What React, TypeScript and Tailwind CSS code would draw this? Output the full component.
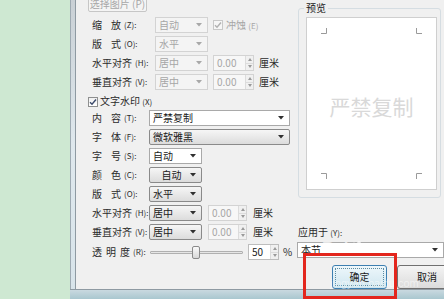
import React from 'react';

type Kind = 'white' | 'button' | 'disabled';

const Arrow = ({ gray }: { gray?: boolean }) => (
  <svg width="6" height="4" viewBox="0 0 6 4" className="shrink-0">
    <path d="M0 0h6L3 3.5z" fill={gray ? '#a8a8a8' : '#303030'} />
  </svg>
);

const Select = ({ text, w, kind, center }: { text: string; w: string; kind: Kind; center?: boolean }) => {
  const look =
    kind === 'white'
      ? 'bg-white border-[#a9a9a9] text-[#202020]'
      : kind === 'button'
        ? 'bg-gradient-to-b from-[#f6f6f6] to-[#dcdcdc] border-[#8a8a8a] rounded-[2px] text-[#202020]'
        : 'bg-[#f4f4f4] border-[#d3d3d3] text-[#a6a6a6]';
  return (
    <div className={`${w} h-[16px] border flex items-center pl-[3px] pr-[5px] shrink-0 ${look}`}>
      <span className={`flex-1 ${center ? 'text-center' : ''}`}>{text}</span>
      <Arrow gray={kind === 'disabled'} />
    </div>
  );
};

const Spin = ({ w, value, disabled }: { w: string; value: string; disabled?: boolean }) => (
  <div
    className={`${w} h-[16px] border flex shrink-0 ${
      disabled ? 'border-[#d3d3d3] bg-[#f7f7f7] text-[#a6a6a6]' : 'border-[#bdbdbd] bg-white text-[#202020]'
    }`}
  >
    <span className="flex-1 pl-[3px] flex items-center">{value}</span>
    <div className="w-[8px] flex flex-col border-l border-[#dcdcdc] bg-[#f0f0f0]">
      <div className="flex-1 flex items-center justify-center border-b border-[#dcdcdc]">
        <svg width="4" height="3" viewBox="0 0 4 3">
          <path d="M0 3h4L2 0z" fill="#9a9a9a" />
        </svg>
      </div>
      <div className="flex-1 flex items-center justify-center">
        <svg width="4" height="3" viewBox="0 0 4 3">
          <path d="M0 0h4L2 3z" fill="#9a9a9a" />
        </svg>
      </div>
    </div>
  </div>
);

// spacing between label characters: 2 chars spread wide, 3 a little, 4 none
const gapFor = (n: number) => (n === 2 ? 'gap-[9px]' : n === 3 ? 'gap-[4px]' : 'gap-0');

const Label = ({ chars, key2, w }: { chars: string[]; key2: string; w: string }) => (
  <div className={`${w} shrink-0 flex items-center text-[#2a2a2a]`}>
    <span className={`flex ${gapFor(chars.length)}`}>
      {chars.map((c, i) => (
        <span key={i}>{c}</span>
      ))}
    </span>
    <span className="ml-[3px] text-[8px]">({key2}):</span>
  </div>
);

const Check = ({ gray }: { gray?: boolean }) => (
  <div
    className={`w-[10px] h-[10px] border flex items-center justify-center shrink-0 ${
      gray ? 'border-[#c8c8c8] bg-[#f6f6f6]' : 'border-[#8e8f8f] bg-gradient-to-b from-[#f0f0f0] to-white'
    }`}
  >
    <svg width="8" height="8" viewBox="0 0 8 8">
      <path d="M1 4.2l2 2L7 1.5" fill="none" stroke={gray ? '#b0b0b0' : '#3b4a6b'} strokeWidth="1.4" />
    </svg>
  </div>
);

const Corner = ({ d }: { d: string }) => (
  <svg width="8" height="8" viewBox="0 0 8 8">
    <path d={d} fill="none" stroke="#9a9a9a" strokeWidth="1" />
  </svg>
);

export default function App() {
  return (
    <div className="relative w-[444px] h-[299px] overflow-hidden flex bg-[#cee8d2] font-['Noto_Sans_CJK_SC','Noto_Sans',sans-serif] text-[10px] leading-[12px]">
      <div className="w-[70px] shrink-0" />

      <div className="flex-1 flex flex-col">
        <div className="flex-1 flex min-h-0">
          <div className="w-[6px] shrink-0 border-l border-[#9eaab2] border-r border-r-[#8e9aa2] bg-gradient-to-b from-[#c9d0d5] via-[#dfe8ed] to-[#d8e4ea]" />

          {/* client area */}
          <div className="flex-1 bg-[#f0f0f0] flex">
            {/* left column */}
            <div className="w-[221px] shrink-0 flex flex-col">
              <div className="ml-[12px] mt-[-5px] w-[59px] h-[17px] border border-[#c6c6c6] rounded-[2px] bg-[#f4f4f4] text-[#a8a8a8] flex items-end justify-center pb-[1px]">
                选择图片 (P)
              </div>

              <div className="mt-[5px] pl-[16px] flex flex-col gap-[3px]">
                <div className="flex items-center">
                  <Label chars={['缩', '放']} key2="Z" w="w-[63px]" />
                  <Select text="自动" w="w-[53px]" kind="disabled" />
                  <div className="ml-[5px] flex items-center gap-[3px] text-[#a6a6a6]">
                    <Check gray />
                    <span>冲蚀 <span className="text-[8px]">(E)</span></span>
                  </div>
                </div>
                <div className="flex items-center">
                  <Label chars={['版', '式']} key2="O" w="w-[63px]" />
                  <Select text="水平" w="w-[53px]" kind="disabled" />
                </div>
                <div className="flex items-center">
                  <Label chars={['水', '平', '对', '齐']} key2="H" w="w-[63px]" />
                  <Select text="居中" w="w-[53px]" kind="disabled" />
                  <div className="ml-[5px]">
                    <Spin w="w-[41px]" value="0.00" disabled />
                  </div>
                  <span className="ml-[5px] text-[#2a2a2a]">厘米</span>
                </div>
                <div className="flex items-center">
                  <Label chars={['垂', '直', '对', '齐']} key2="V" w="w-[63px]" />
                  <Select text="居中" w="w-[53px]" kind="disabled" />
                  <div className="ml-[5px]">
                    <Spin w="w-[41px]" value="0.00" disabled />
                  </div>
                  <span className="ml-[5px] text-[#2a2a2a]">厘米</span>
                </div>
              </div>

              <div className="mt-[3px] h-[17px] ml-[12px] flex items-center gap-[2px] text-[#2a2a2a]">
                <Check />
                <span>文字水印 <span className="text-[8px]">(X)</span></span>
              </div>

              <div className="pl-[16px] flex flex-col gap-[3px]">
                <div className="flex items-center">
                  <Label chars={['内', '容']} key2="T" w="w-[57px]" />
                  <Select text="严禁复制" w="w-[141px]" kind="white" />
                </div>
                <div className="flex items-center">
                  <Label chars={['字', '体']} key2="F" w="w-[57px]" />
                  <Select text="微软雅黑" w="w-[141px]" kind="button" />
                </div>
                <div className="flex items-center">
                  <Label chars={['字', '号']} key2="S" w="w-[57px]" />
                  <Select text="自动" w="w-[53px]" kind="white" />
                </div>
                <div className="flex items-center">
                  <Label chars={['颜', '色']} key2="C" w="w-[57px]" />
                  <Select text="自动" w="w-[53px]" kind="button" center />
                </div>
                <div className="flex items-center">
                  <Label chars={['版', '式']} key2="O" w="w-[57px]" />
                  <Select text="水平" w="w-[53px]" kind="button" />
                </div>
                <div className="flex items-center">
                  <Label chars={['水', '平', '对', '齐']} key2="H" w="w-[57px]" />
                  <Select text="居中" w="w-[53px]" kind="button" />
                  <div className="ml-[6px]">
                    <Spin w="w-[39px]" value="0.00" disabled />
                  </div>
                  <span className="ml-[6px] text-[#2a2a2a]">厘米</span>
                </div>
                <div className="flex items-center">
                  <Label chars={['垂', '直', '对', '齐']} key2="V" w="w-[57px]" />
                  <Select text="居中" w="w-[53px]" kind="button" />
                  <div className="ml-[6px]">
                    <Spin w="w-[39px]" value="0.00" disabled />
                  </div>
                  <span className="ml-[6px] text-[#2a2a2a]">厘米</span>
                </div>
                <div className="mt-[1px] flex items-center">
                  <Label chars={['透', '明', '度']} key2="R" w="w-[58px]" />
                  <div className="w-[93px] h-[16px] flex items-center">
                    <div className="flex-1 h-[3px] border border-[#b0b0b0] bg-[#e6e6e6] rounded-[1px] flex items-center">
                      <div className="ml-[41px] w-[8px] h-[13px] shrink-0 border border-[#8a8a8a] rounded-[2px] bg-gradient-to-b from-[#fafafa] to-[#d8d8d8]" />
                    </div>
                  </div>
                  <div className="ml-[5px]">
                    <Spin w="w-[31px]" value="50" />
                  </div>
                  <span className="ml-[4px] text-[#2a2a2a]">%</span>
                </div>
              </div>
            </div>

            {/* right column */}
            <div className="w-[147px] shrink-0 flex flex-col">
              <fieldset className="ml-[1px] mt-[2px] w-[143px] border border-[#d5dde2] rounded-[3px] pb-[7px]">
                <legend className="ml-[5px] px-[2px] text-[#1a1a1a] leading-[12px]">预览</legend>
                <div className="ml-[7px] mt-[3px] w-[131px] h-[173px] bg-white border border-[#cfcfcf] flex flex-col justify-between px-[14px] py-[10px]">
                  <div className="flex justify-between">
                    <Corner d="M0 5.5h5.5V0" />
                    <Corner d="M8 5.5H2.5V0" />
                  </div>
                  <div className="text-center text-[21px] leading-[24px] text-[#d9d9d9] mt-[4px]">严禁复制</div>
                  <div className="flex justify-between">
                    <Corner d="M0 2.5h5.5V8" />
                    <Corner d="M8 2.5H2.5V8" />
                  </div>
                </div>
              </fieldset>

              <div className="mt-[28px] pl-[1px] text-[#2a2a2a]">
                应用于 <span className="text-[8px]">(Y):</span>
              </div>
              <div className="mt-[3px]">
                <Select text="本节" w="w-[147px]" kind="white" />
              </div>

              <div className="mt-[7px] flex">
                <div className="ml-[35px] w-[55px] h-[24px] shrink-0 border border-[#3c7fb1] rounded-[3px] bg-gradient-to-b from-[#eef7fb] to-[#cfe6ef] p-[2px]">
                  <div className="w-full h-full border border-dotted border-[#5a8aa0] flex items-center justify-center text-[#1a1a1a]">
                    确定
                  </div>
                </div>
                <div className="ml-[10px] w-[60px] h-[24px] shrink-0 border border-[#707070] rounded-[3px] bg-gradient-to-b from-[#f4f4f4] to-[#dcdcdc] flex items-center justify-center text-[#1a1a1a]">
                  取消
                </div>
              </div>
            </div>
          </div>
        </div>

        {/* bottom window frame */}
        <div className="h-[10px] shrink-0 border-t border-[#8e9aa2] bg-gradient-to-b from-[#c9d9e0] to-[#a9c7cf]" />
      </div>

      {/* baidu watermark */}
      <div className="absolute left-[322px] top-[240px] flex items-center gap-[2px] text-white/70 pointer-events-none">
        <span className="text-[17px] leading-[18px] font-bold font-['Liberation_Sans',sans-serif]">Bai</span>
        <svg width="16" height="16" viewBox="0 0 16 16">
          <g fill="#ffffff" fillOpacity="0.7">
            <ellipse cx="4" cy="4" rx="2" ry="2.5" />
            <ellipse cx="9" cy="2.5" rx="2" ry="2.5" />
            <ellipse cx="13" cy="6" rx="2" ry="2.5" />
            <ellipse cx="2.5" cy="9" rx="1.8" ry="2.2" />
            <path d="M8 7c3 0 5 5 4 7s-7 2-8 0 1-7 4-7z" />
          </g>
        </svg>
        <span className="text-[14px] leading-[18px]">经验</span>
      </div>
      <div className="absolute left-[330px] top-[277px] text-[11px] leading-[12px] text-white/50 font-['Liberation_Sans',sans-serif] pointer-events-none">
        jingyan.baidu.com
      </div>

      {/* red annotation box */}
      <div className="absolute left-[303px] top-[253px] w-[94px] h-[46px] border-[3px] border-[#e3261d]" />
    </div>
  );
}
